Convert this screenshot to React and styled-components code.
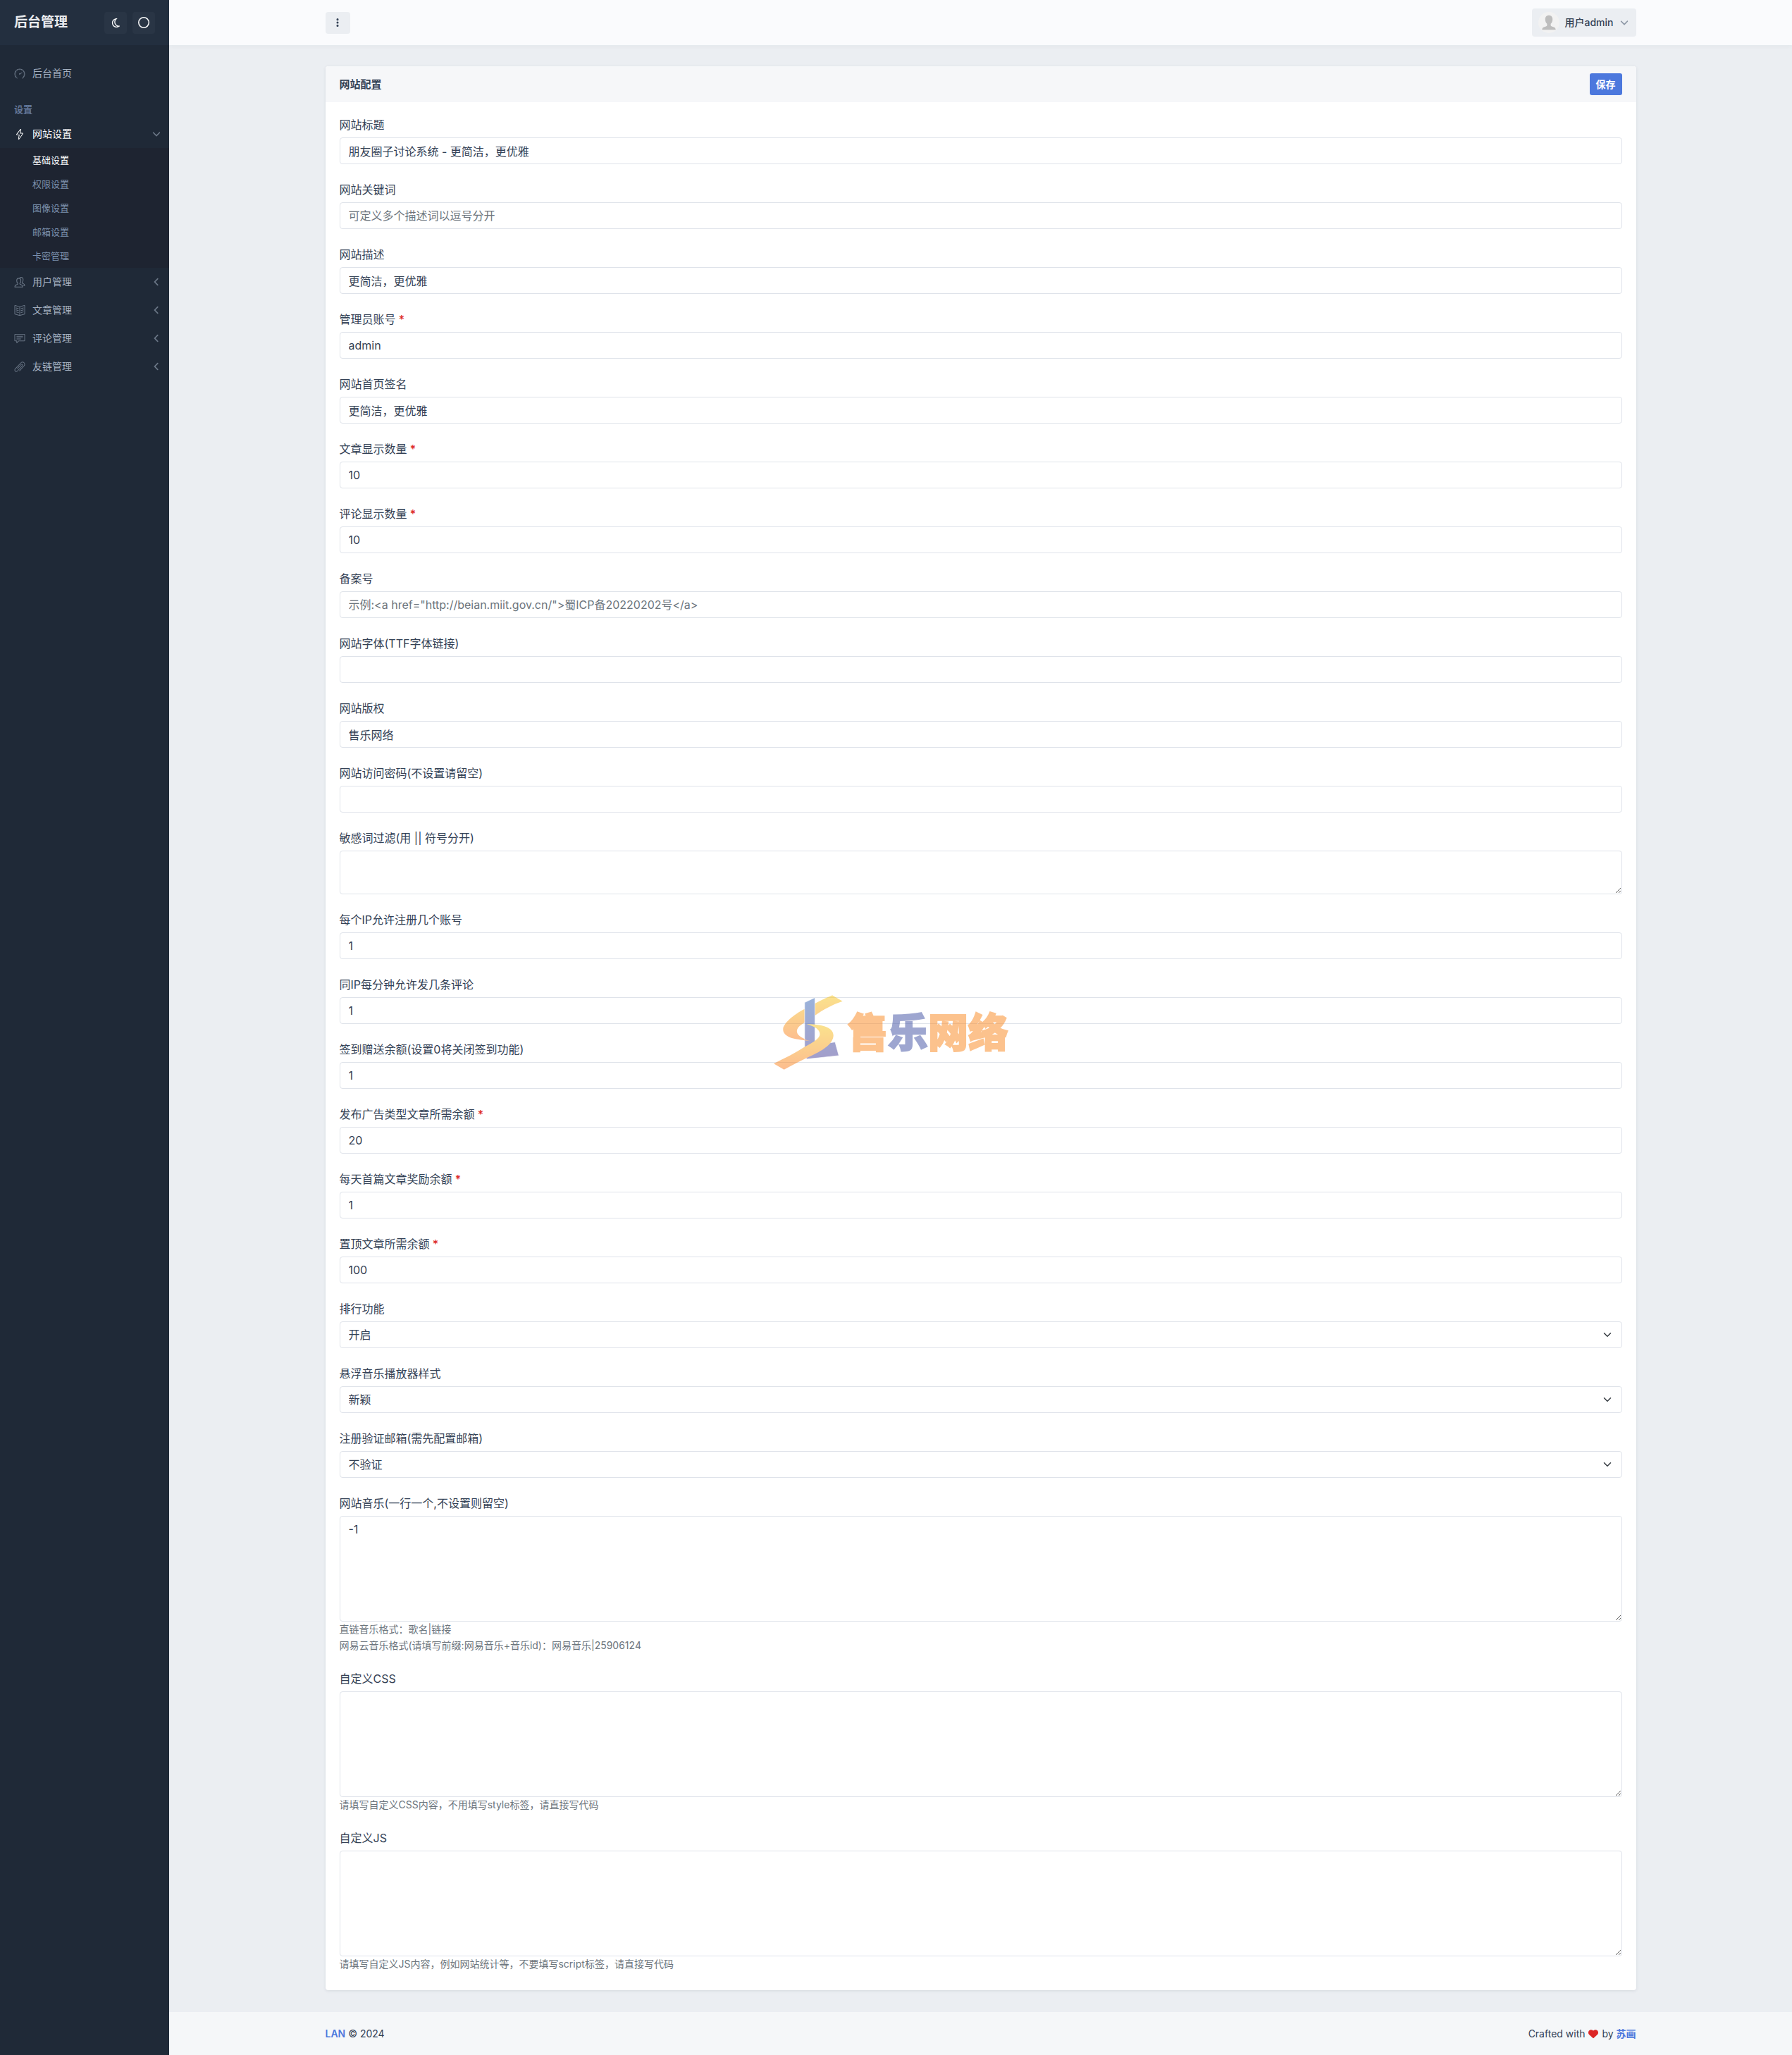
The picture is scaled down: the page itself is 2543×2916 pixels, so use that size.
import React, { useState } from 'react';
import styled, { createGlobalStyle } from 'styled-components';
import { FaRegMoon, FaRegCircle, FaEllipsisVertical, FaHeart, FaAngleDown, FaAngleLeft } from 'react-icons/fa6';
import { SlSpeedometer, SlEnergy, SlBookOpen, SlSpeech, SlPaperClip } from 'react-icons/sl';

const GlobalStyle = createGlobalStyle`
*{
    box-sizing: border-box;
}
body{
    margin: 0;
    background-color: #ebeef2;
    color: #334155;
    font-family: Inter, "Noto Sans CJK SC", sans-serif;
    font-size: 16px;
    line-height: 24px;
}
a{
    text-decoration: none;
}
button, input, textarea, select{
    font: inherit;
    color: inherit;
}
`

const settingLinks = ['基础设置', '权限设置', '图像设置', '邮箱设置', '卡密管理'];

const fields = [
    { id: 'title', label: '网站标题', value: '朋友圈子讨论系统 - 更简洁，更优雅' },
    { id: 'keywords', label: '网站关键词', placeholder: '可定义多个描述词以逗号分开' },
    { id: 'description', label: '网站描述', value: '更简洁，更优雅' },
    { id: 'account', label: '管理员账号', value: 'admin', required: true },
    { id: 'sign', label: '网站首页签名', value: '更简洁，更优雅' },
    { id: 'articles', label: '文章显示数量', value: '10', required: true },
    { id: 'comments', label: '评论显示数量', value: '10', required: true },
    { id: 'icp', label: '备案号', placeholder: '示例:<a href="http://beian.miit.gov.cn/">蜀ICP备20220202号</a>' },
    { id: 'font', label: '网站字体(TTF字体链接)' },
    { id: 'copyright', label: '网站版权', value: '售乐网络' },
    { id: 'password', label: '网站访问密码(不设置请留空)' },
    { id: 'filter', label: '敏感词过滤(用 || 符号分开)', type: 'textarea' },
    { id: 'ipUsers', label: '每个IP允许注册几个账号', value: '1' },
    { id: 'ipComments', label: '同IP每分钟允许发几条评论', value: '1' },
    { id: 'checkin', label: '签到赠送余额(设置0将关闭签到功能)', value: '1' },
    { id: 'adPrice', label: '发布广告类型文章所需余额', value: '20', required: true },
    { id: 'reward', label: '每天首篇文章奖励余额', value: '1', required: true },
    { id: 'topPrice', label: '置顶文章所需余额', value: '100', required: true },
    { id: 'rank', label: '排行功能', type: 'select', options: ['开启', '关闭'] },
    { id: 'player', label: '悬浮音乐播放器样式', type: 'select', options: ['新颖', '经典'] },
    { id: 'verify', label: '注册验证邮箱(需先配置邮箱)', type: 'select', options: ['不验证', '验证'] },
    {
        id: 'music',
        label: '网站音乐(一行一个,不设置则留空)',
        type: 'textarea',
        tall: true,
        value: '-1',
        hints: ['直链音乐格式：歌名|链接', '网易云音乐格式(请填写前缀:网易音乐+音乐id)：网易音乐|25906124']
    },
    {
        id: 'css',
        label: '自定义CSS',
        type: 'textarea',
        tall: true,
        hints: ['请填写自定义CSS内容，不用填写style标签，请直接写代码']
    },
    {
        id: 'js',
        label: '自定义JS',
        type: 'textarea',
        tall: true,
        hints: ['请填写自定义JS内容，例如网站统计等，不要填写script标签，请直接写代码']
    }
];

function UsersIcon() {
    return (
        <svg viewBox="0 0 28 28" fill="none" stroke="currentColor" strokeWidth="2" strokeLinejoin="round" strokeLinecap="round">
            <path d="M1 26.5c0-4 1-5 4.500-6 2.500-.8 3.500-1.300 3.500-3-2-1.700-3-4.500-3-7.500 0-4 2.200-6.500 5.500-6.500S17 6 17 10c0 3-1 5.800-3 7.500 0 1.700 1 2.200 3.500 3 3.500 1 4.500 2 4.500 6z" />
            <path d="M14.500 1.800C15.300 1.300 16.300 1 17.500 1 21 1 23 3.500 23 7.500c0 3-1 5.500-2.800 7.200 0 1.800 1 2.300 3.300 3 2.700.9 3.500 2 3.500 5.300h-2.500" />
        </svg>
    );
}

function Avatar() {
    return (
        <AvatarSvg viewBox="0 0 30 30" aria-hidden="true">
            <circle cx="15" cy="15" r="15" fill="#f2f2f2" />
            <path d="M15 4.800c3.200 0 5.200 2.100 5.200 5.600 0 2.800-1.100 5.100-2.600 6.300v2.100c0 1.400 1.600 1.900 3.600 2.500 2.200.7 3.400 1.600 3.500 4H5.300c.1-2.400 1.300-3.300 3.500-4 2-.6 3.600-1.100 3.600-2.500v-2.100c-1.500-1.200-2.600-3.500-2.600-6.300 0-3.500 2-5.600 5.200-5.600z" fill="#bdbdbd" />
        </AvatarSvg>
    );
}

function Watermark() {
    return (
        <Overlay>
            <svg viewBox="63 66 295 318" width="98" height="106" aria-hidden="true">
                <defs>
                    <linearGradient id="gold" x1="0" y1="0" x2="0" y2="1">
                        <stop offset="0" stopColor="#f7c71d" />
                        <stop offset="1" stopColor="#fb7b1f" />
                    </linearGradient>
                    <linearGradient id="blue" x1="0" y1="0" x2="0" y2="1">
                        <stop offset="0" stopColor="#3769b8" />
                        <stop offset="1" stopColor="#483f96" />
                    </linearGradient>
                </defs>
                <path d="M313 66L357 92C312 107 274 128 239 153L195 183C172 196 161 208 162 222C164 240 190 252 220 262C178 256 150 253 130 245C111 236 102 225 103 210C104 188 145 150 195 125C235 104 270 83 313 66Z" fill="url(#gold)" />
                <path d="M195 97L239 76V280L325 266L341 324L203 339L195 287Z" fill="url(#blue)" stroke="#fff" strokeWidth="2" />
                <path d="M194 254C203 257 211 260 220 262C211 261 202 260 194 259Z" fill="#fb8a1f" />
                <path d="M203 190C275 190 318 206 318 238C317 275 270 302 235 319C190 341 148 360 107 384L63 358C105 338 154 314 195 287C230 268 260 252 260 232C259 213 240 200 203 190Z" fill="url(#gold)" />
            </svg>
            <WatermarkText>售<em>乐</em>网络</WatermarkText>
        </Overlay>
    );
}

function Field({ field }) {
    const { id, label, type, value, placeholder, required, options, tall, hints } = field;

    return (
        <Group>
            <Label htmlFor={id}>
                {label}
                {required && <Required> *</Required>}
            </Label>
            {type === 'select' && (
                <SelectWrap>
                    <Select id={id}>
                        {options.map(option => <option key={option}>{option}</option>)}
                    </Select>
                    <svg viewBox="0 0 16 16" fill="none" stroke="#343a40" strokeWidth="2" strokeLinecap="round" strokeLinejoin="round">
                        <path d="M2 5l6 6 6-6" />
                    </svg>
                </SelectWrap>
            )}
            {type === 'textarea' && <TextArea id={id} $tall={tall} defaultValue={value} />}
            {!type && <Input id={id} type="text" defaultValue={value} placeholder={placeholder} />}
            {hints && (
                <Hints>
                    {hints.map(hint => <span key={hint}>{hint}</span>)}
                </Hints>
            )}
        </Group>
    );
}

function Sidebar() {
    const [open, setOpen] = useState(true)
    const groups = [
        { text: '用户管理', icon: <UsersIcon /> },
        { text: '文章管理', icon: <SlBookOpen /> },
        { text: '评论管理', icon: <SlSpeech /> },
        { text: '友链管理', icon: <SlPaperClip /> }
    ];

    return (
        <Aside>
            <Brand>
                <BrandLink href="#">后台管理</BrandLink>
                <DarkButton aria-label="深色模式"><FaRegMoon size={15} /></DarkButton>
                <DarkButton aria-label="主题颜色"><FaRegCircle size={16} /></DarkButton>
            </Brand>
            <nav>
                <NavList>
                    <li>
                        <NavItem href="#"><SlSpeedometer /><span>后台首页</span></NavItem>
                    </li>
                    <NavHeading>设置</NavHeading>
                    <li>
                        <NavItem href="#" $active onClick={() => setOpen(!open)}>
                            <SlEnergy /><span>网站设置</span><FaAngleDown size={14} />
                        </NavItem>
                        {open && (
                            <SubMenu>
                                {settingLinks.map((text, i) => (
                                    <li key={text}><SubLink href="#" $active={i === 0}>{text}</SubLink></li>
                                ))}
                            </SubMenu>
                        )}
                    </li>
                    {groups.map(group => (
                        <li key={group.text}>
                            <NavItem href="#">{group.icon}<span>{group.text}</span><FaAngleLeft size={14} /></NavItem>
                        </li>
                    ))}
                </NavList>
            </nav>
        </Aside>
    );
}

export default function App() {
    return (
        <>
        <GlobalStyle />
        <Page>
            <Sidebar />
            <Content>
                <Header>
                    <Container>
                        <MenuButton aria-label="菜单"><FaEllipsisVertical /></MenuButton>
                        <UserButton>
                            <Avatar />
                            <span>用户admin</span>
                            <FaAngleDown size={14} />
                        </UserButton>
                    </Container>
                </Header>
                <Main>
                    <Card>
                        <CardHeader>
                            <h3>网站配置</h3>
                            <SaveButton type="submit">保存</SaveButton>
                        </CardHeader>
                        <CardBody>
                            {fields.map(field => <Field key={field.id} field={field} />)}
                        </CardBody>
                    </Card>
                </Main>
                <Footer>
                    <Container>
                        <div><a href="#">LAN</a> © 2024</div>
                        <div>Crafted with <FaHeart /> by <a href="#">苏画</a></div>
                    </Container>
                </Footer>
            </Content>
            <Watermark />
        </Page>
        </>
    );
}


const Page = styled.div`
position: relative;
display: flex;
min-height: 100vh;
`

const Aside = styled.aside`
flex: 0 0 240px;
background-color: #1f2937;
`

const Brand = styled.div`
display: flex;
align-items: center;
gap: 8px;
height: 64px;
padding: 0 20px;
background-color: #232f3f;
`

const BrandLink = styled.a`
flex: 1;
color: #e9ebee;
font-size: 19px;
font-weight: 700;
`

const DarkButton = styled.button`
display: flex;
align-items: center;
justify-content: center;
width: 32px;
height: 31px;
padding: 0;
border: 0;
border-radius: 4px;
background-color: #293545;
color: #f5f6f7;
`

const NavList = styled.ul`
margin: 0;
padding: 20px 0;
list-style: none;
`

const NavItem = styled.a`
display: flex;
align-items: center;
height: 40px;
padding: 0 11px 0 20px;
color: ${p => p.$active ? '#fff' : '#a6b2c2'};
font-size: 14px;
span{
    flex: 1;
}
svg{
    color: #6b7787;
}
svg:first-child{
    width: 16px;
    height: 15px;
    margin-right: 10px;
    color: ${p => p.$active ? '#fff' : '#6b7787'};
}
`

const NavHeading = styled.li`
padding: 22px 20px 6px;
color: #64789b;
font-size: 13px;
font-weight: 600;
line-height: 18px;
`

const SubMenu = styled.ul`
margin: 0;
padding: 0;
list-style: none;
background-color: #1e2431;
`

const SubLink = styled.a`
display: flex;
align-items: center;
height: 34px;
padding-left: 46px;
color: ${p => p.$active ? '#fff' : '#7c90ac'};
font-size: 13px;
`

const Content = styled.div`
display: flex;
flex: 1;
flex-direction: column;
min-width: 0;
`

const Container = styled.div`
display: flex;
align-items: center;
justify-content: space-between;
width: 100%;
max-width: 1920px;
margin: 0 auto;
padding: 0 30px;
`

const Header = styled.header`
display: flex;
height: 64px;
background-color: #fafbfd;
box-shadow: 0 2px 6px rgba(51, 65, 85, .04);
`

const MenuButton = styled.button`
display: flex;
align-items: center;
justify-content: center;
width: 35px;
height: 31px;
padding: 0;
border: 0;
border-radius: 4px;
background-color: #ebeef2;
font-size: 14px;
`

const UserButton = styled.button`
display: flex;
align-items: center;
gap: 8px;
height: 40px;
padding: 0 10px 0 9px;
border: 0;
border-radius: 4px;
background-color: #ebeef2;
font-size: 14px;
font-weight: 500;
svg:last-child{
    color: #8d97a5;
}
`

const AvatarSvg = styled.svg`
width: 30px;
height: 30px;
`

const Main = styled.main`
flex: 1;
width: 100%;
max-width: 1920px;
margin: 0 auto;
padding: 30px;
`

const Card = styled.form`
overflow: hidden;
border-radius: 4px;
background-color: #fff;
box-shadow: 0 1px 4px rgba(51, 65, 85, .12);
`

const CardHeader = styled.div`
display: flex;
align-items: center;
justify-content: space-between;
padding: 10px 20px;
background-color: #f6f7f9;
h3{
    margin: 0;
    font-size: 15px;
    font-weight: 600;
    line-height: 24px;
}
`

const SaveButton = styled.button`
height: 31px;
padding: 0 9px;
border: 0;
border-radius: 3px;
background-color: #4c78dd;
color: #fff;
font-size: 14px;
font-weight: 600;
line-height: 21px;
`

const CardBody = styled.div`
padding: 20px 20px 2px;
`

const Group = styled.div`
margin-bottom: 24px;
`

const Label = styled.label`
display: block;
margin-bottom: 6px;
`

const Required = styled.span`
color: #dc2626;
font-weight: 500;
`

const Input = styled.input`
display: block;
width: 100%;
height: 38px;
padding: 6px 12px;
border: 1px solid #dfe3ea;
border-radius: 4px;
background-color: #fff;
outline: none;
&::placeholder{
    color: #6c757d;
    opacity: 1;
}
`

const TextArea = styled(Input).attrs({ as: 'textarea' })`
height: ${p => p.$tall ? '150px' : '62px'};
resize: vertical;
`

const SelectWrap = styled.div`
position: relative;
svg{
    position: absolute;
    top: 13px;
    right: 15px;
    width: 12px;
    height: 12px;
    pointer-events: none;
}
`

const Select = styled(Input).attrs({ as: 'select' })`
appearance: none;
`

const Hints = styled.div`
display: flex;
flex-direction: column;
gap: 1px;
color: #6c757d;
font-size: 14px;
line-height: 22px;
`

const Footer = styled.footer`
padding: 20px 0;
background-color: #f5f7f9;
font-size: 14px;
line-height: 21px;
a{
    color: #4c78dd;
    font-weight: 600;
}
svg{
    margin: 0 1px;
    color: #dc2626;
    vertical-align: -2px;
}
`

const Overlay = styled.div`
position: absolute;
inset: 14px 14px 0 0;
display: flex;
align-items: center;
justify-content: center;
gap: 7px;
opacity: .5;
pointer-events: none;
`

const WatermarkText = styled.div`
color: #fb871d;
font-size: 57px;
font-weight: 900;
line-height: 57px;
-webkit-text-stroke: 2px currentColor;
em{
    color: #3f50a2;
    font-style: normal;
}
`
